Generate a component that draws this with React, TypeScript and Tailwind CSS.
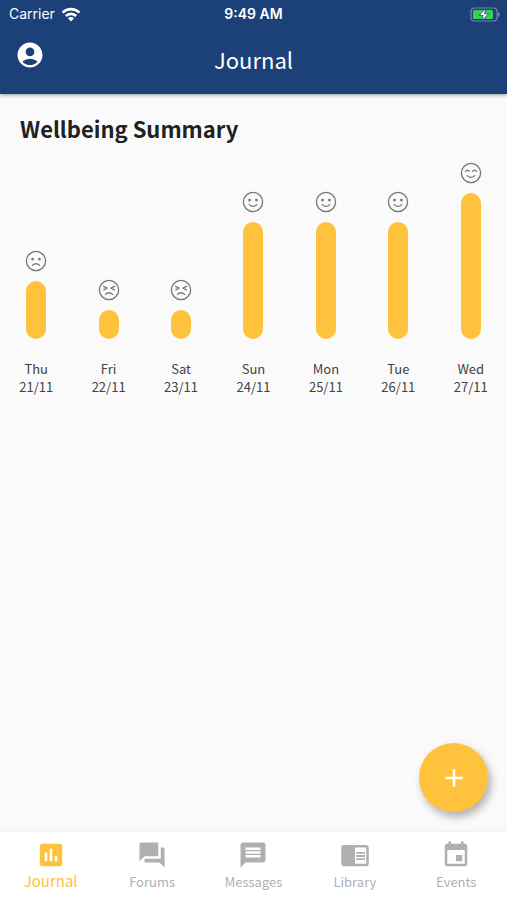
import type { IconType } from "react-icons";
import {
  MdAccountCircle,
  MdAdd,
  MdChromeReaderMode,
  MdEvent,
  MdForum,
  MdInsertChart,
  MdMessage,
} from "react-icons/md";

type Mood = "awful" | "bad" | "good" | "great";

type Day = { name: string; date: string; mood: Mood };

const days: Day[] = [
  { name: "Thu", date: "21/11", mood: "bad" },
  { name: "Fri", date: "22/11", mood: "awful" },
  { name: "Sat", date: "23/11", mood: "awful" },
  { name: "Sun", date: "24/11", mood: "good" },
  { name: "Mon", date: "25/11", mood: "good" },
  { name: "Tue", date: "26/11", mood: "good" },
  { name: "Wed", date: "27/11", mood: "great" },
];

const barHeights: Record<Mood, string> = {
  awful: "h-[29px]",
  bad: "h-[58px]",
  good: "h-[117px]",
  great: "h-[146px]",
};

const tabs: { label: string; icon: IconType; active?: boolean }[] = [
  { label: "Journal", icon: MdInsertChart, active: true },
  { label: "Forums", icon: MdForum },
  { label: "Messages", icon: MdMessage },
  { label: "Library", icon: MdChromeReaderMode },
  { label: "Events", icon: MdEvent },
];

function Face({ mood }: { mood: Mood }) {
  return (
    <svg
      viewBox="0 0 22 22"
      className="size-[22px] text-[#757575]"
      fill="none"
      stroke="currentColor"
      strokeWidth="1.3"
      strokeLinecap="round"
      strokeLinejoin="round"
      role="img"
      aria-label={mood}
    >
      <circle cx="11" cy="11" r="9.6" />
      {(mood === "bad" || mood === "good") && (
        <g fill="currentColor" stroke="none">
          <circle cx="7.6" cy="9.1" r="1.4" />
          <circle cx="14.4" cy="9.1" r="1.4" />
        </g>
      )}
      {mood === "awful" && (
        <path d="M5.6 7.4 9 9.1 5.8 10.9M16.4 7.4 13 9.1l3.2 1.8" />
      )}
      {mood === "great" && (
        <path d="M5.4 9.4q2-2.7 4 0M12.6 9.4q2-2.7 4 0" />
      )}
      {mood === "bad" || mood === "awful" ? (
        <path d="M7.4 15.4q3.6-3.4 7.2 0" />
      ) : (
        <path d="M7.2 13.6q3.8 3.6 7.6 0" />
      )}
    </svg>
  );
}

function StatusBar() {
  return (
    <div className="grid h-7 grid-cols-3 items-center px-[7px] font-['Inter',sans-serif] text-sm leading-5">
      <div className="flex items-center gap-1.5 pl-0.5">
        <span>Carrier</span>
        <svg viewBox="0 0 20 15" className="h-[15px] w-5" aria-hidden="true">
          <g fill="none" stroke="currentColor" strokeWidth="2.6">
            <path d="M1.6 5.6a12 12 0 0 1 16.8 0" />
            <path d="M4.8 9a7.4 7.4 0 0 1 10.4 0" />
          </g>
          <path d="M10 14.4 6.9 11.2a4.4 4.4 0 0 1 6.2 0z" fill="currentColor" />
        </svg>
      </div>
      <span className="text-center font-semibold">9:49 AM</span>
      <svg
        viewBox="0 0 31 15"
        className="h-[15px] w-[31px] justify-self-end"
        aria-hidden="true"
      >
        <rect x="2" y="1" width="26" height="13" rx="3.5" fill="none" stroke="#7089ad" strokeWidth="1.2" />
        <rect x="4" y="3" width="20" height="9" rx="1.6" fill="#34d158" />
        <path d="M29 5v5a2.6 2.6 0 0 0 0-5" fill="#7089ad" />
        <path
          d="M16.8 1.4 10 8.3h4.1l-1.3 5.4L19.6 6.8h-4.1z"
          fill="#fff"
          stroke="#1c4078"
          strokeWidth="0.8"
        />
      </svg>
    </div>
  );
}

function App() {
  return (
    <div className="relative flex min-h-screen flex-col bg-[#fafafa] font-['Noto_Sans_CJK_SC',sans-serif] text-[#212121]">
      <header className="bg-[#1c4078] pb-5 text-white shadow-[0_1px_4px_rgba(0,0,0,0.4)]">
        <StatusBar />
        <div className="grid grid-cols-[40px_1fr_40px] items-start px-[15px] pt-3">
          <button type="button" aria-label="Account">
            <MdAccountCircle className="size-[30px]" />
          </button>
          <h1 className="pt-1 text-center text-[22px] leading-[30px]">
            Journal
          </h1>
        </div>
      </header>

      <main className="flex-1">
        <h2 className="px-5 pt-5 text-[22px] leading-7 font-bold">
          Wellbeing Summary
        </h2>
        <div className="mt-5 grid grid-cols-7 items-end">
          {days.map((day) => (
            <div key={day.date} className="flex flex-col items-center">
              <Face mood={day.mood} />
              <div
                className={`mt-[9px] w-5 rounded-full bg-[#ffc23d] ${barHeights[day.mood]}`}
              />
              <p className="mt-[21px] text-center text-[13px] leading-[18px] text-[#424242]">
                {day.name}
                <br />
                {day.date}
              </p>
            </div>
          ))}
        </div>
      </main>

      <button
        type="button"
        aria-label="Add entry"
        className="fixed right-[19px] bottom-[88px] flex size-[69px] items-center justify-center rounded-full bg-[#ffc23d] text-white shadow-[3px_5px_8px_rgba(0,0,0,0.3)]"
      >
        <MdAdd className="size-[30px]" />
      </button>

      <nav className="grid h-[68px] grid-cols-5 bg-white shadow-[0_-1px_4px_rgba(0,0,0,0.05)]">
        {tabs.map(({ label, icon: Icon, active }) => (
          <a
            key={label}
            href="#"
            className={`flex flex-col items-center pt-2 ${active ? "text-[#ffc23d]" : "text-[#b0b0b0]"}`}
          >
            <Icon className="size-[30px]" />
            <span
              className={
                active ? "text-[15px] leading-[22px]" : "text-[13px] leading-6"
              }
            >
              {label}
            </span>
          </a>
        ))}
      </nav>
    </div>
  );
}

export default App;
